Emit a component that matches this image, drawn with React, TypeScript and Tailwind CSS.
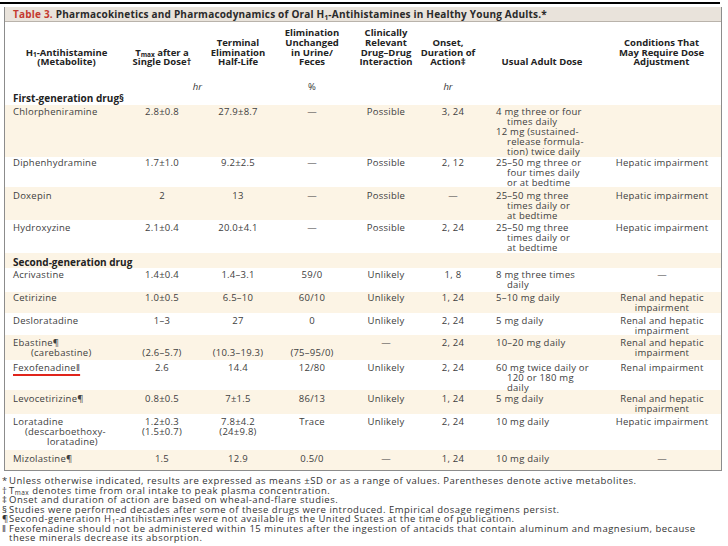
import React from "react";

type Row = {
  cls: string;
  bg: boolean;
  c1: React.ReactNode;
  c2?: React.ReactNode;
  c3?: React.ReactNode;
  c4?: React.ReactNode;
  c5?: React.ReactNode;
  c6?: React.ReactNode;
  c7?: React.ReactNode;
  c8?: React.ReactNode;
};

const GRID = "grid grid-cols-[123px_68px_84px_64px_84px_50px_128px_115px]";

const Sub = ({ children }: { children: React.ReactNode }) => (
  <span className="relative top-[1.5px] text-[6.5px] leading-none">{children}</span>
);

const Dose = ({ lines }: { lines: string[] }) => (
  <>
    {lines.map((l, i) => {
      const cont = l.startsWith(" ");
      return (
        <div key={i} className={cont ? "pl-[11px] whitespace-nowrap" : "whitespace-nowrap"}>
          {l.trim()}
        </div>
      );
    })}
  </>
);

const Lines = ({ lines }: { lines: React.ReactNode[] }) => (
  <>
    {lines.map((l, i) => (
      <div key={i} className="whitespace-nowrap">
        {l === "" ? "\u00a0" : l}
      </div>
    ))}
  </>
);

const renal = <Lines lines={["Renal and hepatic", "impairment"]} />;

const firstRows: Row[] = [
  {
    cls: "h-[52px] pt-[2px]",
    bg: true,
    c1: "Chlorpheniramine",
    c2: "2.8±0.8",
    c3: "27.9±8.7",
    c4: "—",
    c5: "Possible",
    c6: "3, 24",
    c7: (
      <Dose
        lines={[
          "4 mg three or four",
          " times daily",
          "12 mg (sustained-",
          " release formula-",
          " tion) twice daily",
        ]}
      />
    ),
    c8: "",
  },
  {
    cls: "h-[30px] pt-[1px]",
    bg: false,
    c1: "Diphenhydramine",
    c2: "1.7±1.0",
    c3: "9.2±2.5",
    c4: "—",
    c5: "Possible",
    c6: "2, 12",
    c7: <Dose lines={["25–50 mg three or", " four times daily", " or at bedtime"]} />,
    c8: "Hepatic impairment",
  },
  {
    cls: "h-[33px] pt-[4px]",
    bg: true,
    c1: "Doxepin",
    c2: "2",
    c3: "13",
    c4: "—",
    c5: "Possible",
    c6: "—",
    c7: <Dose lines={["25–50 mg three", " times daily or", " at bedtime"]} />,
    c8: "Hepatic impairment",
  },
  {
    cls: "h-[33px] pt-[3px]",
    bg: false,
    c1: "Hydroxyzine",
    c2: "2.1±0.4",
    c3: "20.0±4.1",
    c4: "—",
    c5: "Possible",
    c6: "2, 24",
    c7: <Dose lines={["25–50 mg three", " times daily or", " at bedtime"]} />,
    c8: "Hepatic impairment",
  },
];

const secondRows: Row[] = [
  {
    cls: "h-[24px] pt-[2px]",
    bg: false,
    c1: "Acrivastine",
    c2: "1.4±0.4",
    c3: "1.4–3.1",
    c4: "59/0",
    c5: "Unlikely",
    c6: "1, 8",
    c7: <Dose lines={["8 mg three times", " daily"]} />,
    c8: "—",
  },
  {
    cls: "h-[21px] pt-[1px]",
    bg: true,
    c1: "Cetirizine",
    c2: "1.0±0.5",
    c3: "6.5–10",
    c4: "60/10",
    c5: "Unlikely",
    c6: "1, 24",
    c7: <Dose lines={["5–10 mg daily"]} />,
    c8: renal,
  },
  {
    cls: "h-[22px] pt-[3px]",
    bg: false,
    c1: "Desloratadine",
    c2: "1–3",
    c3: "27",
    c4: "0",
    c5: "Unlikely",
    c6: "2, 24",
    c7: <Dose lines={["5 mg daily"]} />,
    c8: renal,
  },
  {
    cls: "h-[25px] pt-[3px]",
    bg: true,
    c1: (
      <>
        <div>Ebastine¶</div>
        <div className="pl-[18px]">(carebastine)</div>
      </>
    ),
    c2: <Lines lines={["", "(2.6–5.7)"]} />,
    c3: <Lines lines={["", "(10.3–19.3)"]} />,
    c4: <Lines lines={["", "(75–95/0)"]} />,
    c5: "—",
    c6: "2, 24",
    c7: <Dose lines={["10–20 mg daily"]} />,
    c8: renal,
  },
  {
    cls: "h-[30px] pt-[3px]",
    bg: false,
    c1: (
      <span className="underline decoration-[#e0241b] decoration-2 underline-offset-[3px]">
        Fexofenadine‖
      </span>
    ),
    c2: "2.6",
    c3: "14.4",
    c4: "12/80",
    c5: "Unlikely",
    c6: "2, 24",
    c7: <Dose lines={["60 mg twice daily or", " 120 or 180 mg", " daily"]} />,
    c8: "Renal impairment",
  },
  {
    cls: "h-[24px] pt-[4px]",
    bg: true,
    c1: "Levocetirizine¶",
    c2: "0.8±0.5",
    c3: "7±1.5",
    c4: "86/13",
    c5: "Unlikely",
    c6: "1, 24",
    c7: <Dose lines={["5 mg daily"]} />,
    c8: renal,
  },
  {
    cls: "h-[36px] pt-[3px]",
    bg: false,
    c1: (
      <>
        <div>Loratadine</div>
        <div className="pl-[12px]">(descarboethoxy-</div>
        <div className="pl-[34px]">loratadine)</div>
      </>
    ),
    c2: <Lines lines={["1.2±0.3", "(1.5±0.7)"]} />,
    c3: <Lines lines={["7.8±4.2", "(24±9.8)"]} />,
    c4: "Trace",
    c5: "Unlikely",
    c6: "2, 24",
    c7: <Dose lines={["10 mg daily"]} />,
    c8: "Hepatic impairment",
  },
  {
    cls: "h-[20px] pt-[4px]",
    bg: true,
    c1: "Mizolastine¶",
    c2: "1.5",
    c3: "12.9",
    c4: "0.5/0",
    c5: "—",
    c6: "1, 24",
    c7: <Dose lines={["10 mg daily"]} />,
    c8: "—",
  },
];

const DataRow = ({ r }: { r: Row }) => (
  <div className={`${GRID} ${r.cls} ${r.bg ? "bg-[#fcf4e5]" : "bg-white"} text-[9.5px] leading-[10px] tracking-[0.25px] text-[#404040]`}>
    <div className="pl-[8px] whitespace-nowrap">{r.c1}</div>
    <div className="text-center">{r.c2}</div>
    <div className="text-center">{r.c3}</div>
    <div className="text-center">{r.c4}</div>
    <div className="text-center">{r.c5}</div>
    <div className="text-center">{r.c6}</div>
    <div className="pl-[18px]">{r.c7}</div>
    <div className="text-center pr-[3px]">{r.c8}</div>
  </div>
);

const Section = ({ label, cls, bg }: { label: string; cls: string; bg: boolean }) => (
  <div className={`${cls} ${bg ? "bg-[#fcf4e5]" : "bg-white"} pl-[8px] text-[10px] leading-[10px] font-bold text-[#222]`}>
    {label}
  </div>
);

const Foot = ({ sym, children }: { sym: string; children: React.ReactNode }) => (
  <div className="flex">
    <span className="w-[7px] shrink-0 tracking-normal">{sym}</span>
    <span className="whitespace-nowrap">{children}</span>
  </div>
);

export default function App() {
  return (
    <div className="w-[728px] h-[546px] bg-white overflow-hidden font-['Open_Sans',sans-serif] text-[#333]">
      <div className="h-[2px] w-[720px] bg-black mt-[2px]" />
      <div className="ml-[4px] mt-[3px] w-[718px] border-x border-b border-[#8c8c8c]">
        {/* title bar */}
        <div className="h-[15px] bg-[#e9e3db] border-b border-[#b9b3ab] pl-[8px] text-[10px] leading-[14px] tracking-[0.2px] font-bold text-[#2a2a2a] whitespace-nowrap">
          <span className="text-[#c43a30]">Table 3.</span> Pharmacokinetics and Pharmacodynamics of Oral H
          <Sub>1</Sub>-Antihistamines in Healthy Young Adults.*
        </div>
        {/* header */}
        <div className={`${GRID} h-[52px] pb-[7px] items-end text-center text-[9.5px] leading-[9.7px] font-bold text-[#232323]`}>
          <div>
            H<Sub>1</Sub>-Antihistamine
            <br />
            (Metabolite)
          </div>
          <div>
            T<Sub>max</Sub> after a
            <br />
            Single Dose†
          </div>
          <div>
            Terminal
            <br />
            Elimination
            <br />
            Half-Life
          </div>
          <div>
            Elimination
            <br />
            Unchanged
            <br />
            in Urine/
            <br />
            Feces
          </div>
          <div>
            Clinically
            <br />
            Relevant
            <br />
            Drug–Drug
            <br />
            Interaction
          </div>
          <div className="-ml-[10px] whitespace-nowrap">
            Onset,
            <br />
            Duration of
            <br />
            Action‡
          </div>
          <div>Usual Adult Dose</div>
          <div className="pr-[4px]">
            Conditions That
            <br />
            May Require Dose
            <br />
            Adjustment
          </div>
        </div>
        {/* units */}
        <div className={`${GRID} h-[18px] items-end text-[9.5px] leading-[10px] text-[#333]`}>
          <div />
          <div className="text-right italic -mr-[6px]">hr</div>
          <div />
          <div className="text-center">%</div>
          <div />
          <div className="text-center italic pr-[10px]">hr</div>
          <div />
          <div />
        </div>
        <Section label="First-generation drug§" cls="h-[13px] pt-[1px]" bg={false} />
        {firstRows.map((r, i) => (
          <DataRow key={i} r={r} />
        ))}
        <Section label="Second-generation drug" cls="h-[15px] pt-[4px]" bg={true} />
        {secondRows.map((r, i) => (
          <DataRow key={i} r={r} />
        ))}
      </div>
      {/* footnotes */}
      <div className="mt-[5px] pl-[2px] text-[9.5px] leading-[9.5px] tracking-[0.5px] text-[#333]">
        <Foot sym="*">
          Unless otherwise indicated, results are expressed as means ±SD or as a range of values. Parentheses denote active metabolites.
        </Foot>
        <Foot sym="†">
          T<Sub>max</Sub> denotes time from oral intake to peak plasma concentration.
        </Foot>
        <Foot sym="‡">Onset and duration of action are based on wheal-and-flare studies.</Foot>
        <Foot sym="§">
          Studies were performed decades after some of these drugs were introduced. Empirical dosage regimens persist.
        </Foot>
        <Foot sym="¶">
          Second-generation H<Sub>1</Sub>-antihistamines were not available in the United States at the time of publication.
        </Foot>
        <Foot sym="‖">
          Fexofenadine should not be administered within 15 minutes after the ingestion of antacids that contain aluminum and magnesium, because
          <br />
          these minerals decrease its absorption.
        </Foot>
      </div>
    </div>
  );
}
